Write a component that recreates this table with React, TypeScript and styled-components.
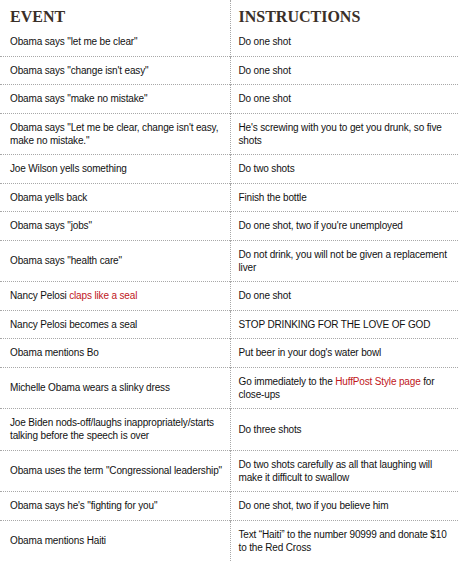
import styled, { createGlobalStyle } from 'styled-components'

const GlobalStyle = createGlobalStyle`
  html, body {
    margin: 0;
    padding: 0;
    background: #ffffff;
  }
`

type Row = {
  event: React.ReactNode
  instruction: React.ReactNode
}

const Highlight = styled.span`
  color: #c0161b;
`

const ROWS: Row[] = [
  { event: 'Obama says "let me be clear"', instruction: 'Do one shot' },
  { event: 'Obama says "change isn\'t easy"', instruction: 'Do one shot' },
  { event: 'Obama says "make no mistake"', instruction: 'Do one shot' },
  {
    event: 'Obama says "Let me be clear, change isn\'t easy, make no mistake."',
    instruction: "He's screwing with you to get you drunk, so five shots",
  },
  { event: 'Joe Wilson yells something', instruction: 'Do two shots' },
  { event: 'Obama yells back', instruction: 'Finish the bottle' },
  { event: 'Obama says "jobs"', instruction: "Do one shot, two if you're unemployed" },
  {
    event: 'Obama says "health care"',
    instruction: 'Do not drink, you will not be given a replacement liver',
  },
  {
    event: (
      <>
        Nancy Pelosi <Highlight>claps like a seal</Highlight>
      </>
    ),
    instruction: 'Do one shot',
  },
  { event: 'Nancy Pelosi becomes a seal', instruction: 'STOP DRINKING FOR THE LOVE OF GOD' },
  { event: 'Obama mentions Bo', instruction: "Put beer in your dog's water bowl" },
  {
    event: 'Michelle Obama wears a slinky dress',
    instruction: (
      <>
        Go immediately to the <Highlight>HuffPost Style page</Highlight> for close-ups
      </>
    ),
  },
  {
    event: 'Joe Biden nods-off/laughs inappropriately/starts talking before the speech is over',
    instruction: 'Do three shots',
  },
  {
    event: 'Obama uses the term "Congressional leadership"',
    instruction: 'Do two shots carefully as all that laughing will make it difficult to swallow',
  },
  { event: 'Obama says he\'s "fighting for you"', instruction: 'Do one shot, two if you believe him' },
  {
    event: 'Obama mentions Haiti',
    instruction: 'Text \u201cHaiti\u201d to the number 90999 and donate $10 to the Red Cross',
  },
]

const Table = styled.table`
  width: 458px;
  border-collapse: collapse;
  table-layout: fixed;
  font-family: 'Liberation Sans', Arial, Helvetica, sans-serif;
`

const HeadCell = styled.th<{ $right?: boolean }>`
  height: 28px;
  box-sizing: border-box;
  padding: 8px 4px 2px ${(p) => (p.$right ? '8px' : '10px')};
  text-align: left;
  vertical-align: top;
  font-family: 'Liberation Serif', 'Times New Roman', serif;
  font-weight: bold;
  font-size: 16px;
  line-height: 18px;
  color: #3a2f28;
  border-left: ${(p) => (p.$right ? '1px dotted #a8a8a8' : 'none')};
`

const BodyRow = styled.tr<{ $last?: boolean }>`
  border-bottom: ${(p) => (p.$last ? 'none' : '1px dotted #a8a8a8')};
`

const Cell = styled.td<{ $right?: boolean }>`
  padding: 7px 4px 7.5px ${(p) => (p.$right ? '8px' : '10px')};
  vertical-align: middle;
  font-size: 10px;
  line-height: 13px;
  letter-spacing: -0.15px;
  color: #111111;
  border-left: ${(p) => (p.$right ? '1px dotted #a8a8a8' : 'none')};
`

export default function App() {
  return (
    <>
      <GlobalStyle />
      <Table>
        <colgroup>
          <col style={{ width: 230 }} />
          <col />
        </colgroup>
        <thead>
          <tr>
            <HeadCell>EVENT</HeadCell>
            <HeadCell $right>INSTRUCTIONS</HeadCell>
          </tr>
        </thead>
        <tbody>
          {ROWS.map((row, i) => (
            <BodyRow key={i} $last={i === ROWS.length - 1}>
              <Cell>{row.event}</Cell>
              <Cell $right>{row.instruction}</Cell>
            </BodyRow>
          ))}
        </tbody>
      </Table>
    </>
  )
}
